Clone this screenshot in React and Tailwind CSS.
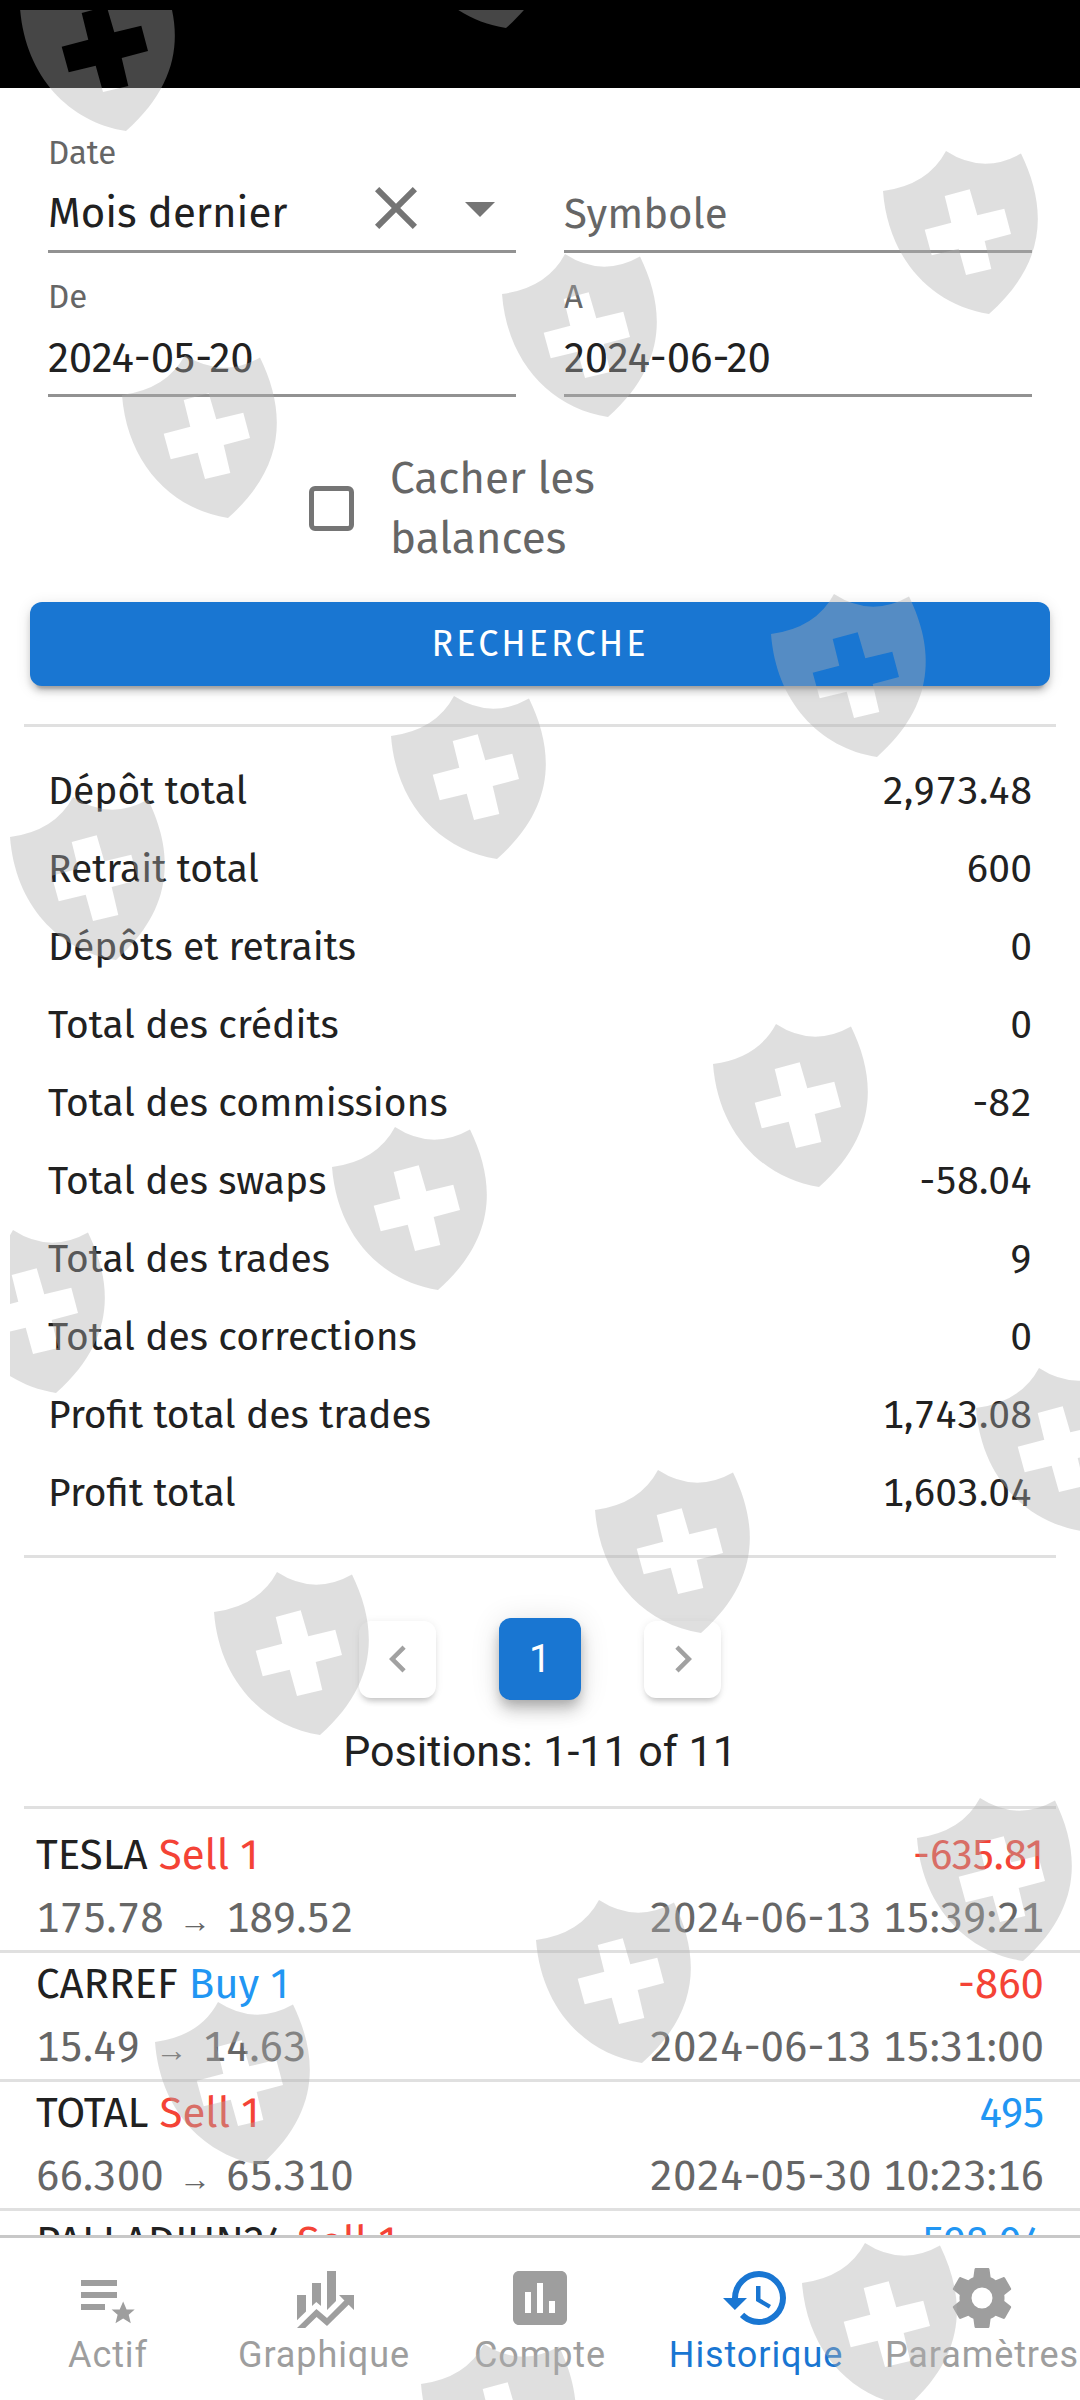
import { useState } from "react";

const ICONS = {
    close: "M19,6.41L17.59,5L12,10.59L6.41,5L5,6.41L10.59,12L5,17.59L6.41,19L12,13.41L17.59,19L19,17.59L13.41,12L19,6.41Z",
    menuDown: "M7,10L12,15L17,10H7Z",
    chevronLeft:
        "M15.41,16.58L10.83,12L15.41,7.41L14,6L8,12L14,18L15.41,16.58Z",
    chevronRight:
        "M8.59,16.58L13.17,12L8.59,7.41L10,6L16,12L10,18L8.59,16.58Z",
    playlistStar:
        "M15,6H3V8H15V6M15,10H3V12H15V10M3,16H11V14H3V16M14.5,20.4L17.05,18.8L19.6,20.4L18.9,17.6L20.9,15.8H18.2L17.05,13.2L15.9,15.8H13.2L15.2,17.6L14.5,20.4Z",
    finance:
        "M6,16.5L3,19.44V11H6M11,14.66L9.43,13.32L8,14.64V7H11M16,13L13,16V3H16M18.81,12.81L17,11H22V16L20.21,14.21L13,21.36L9.53,18.34L5.75,22H3L9.47,15.66L13,18.64",
    chartBox:
        "M9 17H7V10H9V17M13 17H11V7H13V17M17 17H15V13H17V17M19 3H5C3.9 3 3 3.9 3 5V19C3 20.1 3.9 21 5 21H19C20.1 21 21 20.1 21 19V5C21 3.9 20.1 3 19 3Z",
    history:
        "M13.5,8H12V13L16.28,15.54L17,14.33L13.5,12.25V8M13,3A9,9 0 0,0 4,12H1L4.96,16.03L9,12H6A7,7 0 0,1 13,5A7,7 0 0,1 20,12A7,7 0 0,1 13,19C11.07,19 9.32,18.21 8.06,16.94L6.64,18.36C8.27,20 10.5,21 13,21A9,9 0 0,0 22,12A9,9 0 0,0 13,3",
    cog: "M12,15.5A3.5,3.5 0 0,1 8.5,12A3.5,3.5 0 0,1 12,8.5A3.5,3.5 0 0,1 15.5,12A3.5,3.5 0 0,1 12,15.5M19.43,12.97C19.47,12.65 19.5,12.33 19.5,12C19.5,11.67 19.47,11.34 19.43,11L21.54,9.37C21.73,9.22 21.78,8.95 21.66,8.73L19.66,5.27C19.54,5.05 19.27,4.96 19.05,5.05L16.56,6.05C16.04,5.66 15.5,5.32 14.87,5.07L14.5,2.42C14.46,2.18 14.25,2 14,2H10C9.75,2 9.54,2.18 9.5,2.42L9.13,5.07C8.5,5.32 7.96,5.66 7.44,6.05L4.95,5.05C4.73,4.96 4.46,5.05 4.34,5.27L2.34,8.73C2.21,8.95 2.27,9.22 2.46,9.37L4.57,11C4.53,11.34 4.5,11.67 4.5,12C4.5,12.33 4.53,12.65 4.57,12.97L2.46,14.63C2.27,14.78 2.21,15.05 2.34,15.27L4.34,18.73C4.46,18.95 4.73,19.03 4.95,18.95L7.44,17.94C7.96,18.34 8.5,18.68 9.13,18.93L9.5,21.58C9.54,21.82 9.75,22 10,22H14C14.25,22 14.46,21.82 14.5,21.58L14.87,18.93C15.5,18.67 16.04,18.34 16.56,17.94L19.05,18.95C19.27,19.03 19.54,18.95 19.66,18.73L21.66,15.27C21.78,15.05 21.73,14.78 21.54,14.63L19.43,12.97Z",
};

const totals = [
    ["Dépôt total", "2,973.48"],
    ["Retrait total", "600"],
    ["Dépôts et retraits", "0"],
    ["Total des crédits", "0"],
    ["Total des commissions", "-82"],
    ["Total des swaps", "-58.04"],
    ["Total des trades", "9"],
    ["Total des corrections", "0"],
    ["Profit total des trades", "1,743.08"],
    ["Profit total", "1,603.04"],
];

const positions = [
    { symbol: "TESLA", side: "Sell", volume: 1, profit: "-635.81", open: "175.78", close: "189.52", time: "2024-06-13 15:39:21" },
    { symbol: "CARREF", side: "Buy", volume: 1, profit: "-860", open: "15.49", close: "14.63", time: "2024-06-13 15:31:00" },
    { symbol: "TOTAL", side: "Sell", volume: 1, profit: "495", open: "66.300", close: "65.310", time: "2024-05-30 10:23:16" },
    { symbol: "PALLADJUN24", side: "Sell", volume: 1, profit: "598.04" },
];

const tabs = [
    { label: "Actif", icon: "playlistStar" },
    { label: "Graphique", icon: "finance" },
    { label: "Compte", icon: "chartBox" },
    { label: "Historique", icon: "history", active: true },
    { label: "Paramètres", icon: "cog" },
];

const shields = [
    [20, -32], [400, -135], [883, 151], [502, 254], [122, 355],
    [771, 594], [391, 696], [10, 797], [713, 1024], [332, 1127],
    [-50, 1230], [976, 1368], [595, 1470], [214, 1572], [917, 1798],
    [536, 1900], [155, 2002], [802, 2243], [421, 2344],
];

function Icon({ name, className }) {
    return (
        <svg viewBox="0 0 24 24" className={className} fill="currentColor" fillRule="evenodd" aria-hidden="true">
            <path d={ICONS[name]} />
        </svg>
    );
}

function Watermark() {
    return (
        <svg className="pointer-events-none absolute top-2.5 left-2.5 size-full overflow-hidden" aria-hidden="true">
            <g fill="#b0b0b0" fillOpacity="0.4" fillRule="evenodd">
                {shields.map(([x, y]) => (
                    <path
                        key={`${x}-${y}`}
                        transform={`translate(${x - 10} ${y - 10})`}
                        d="M0 40Q45 34 63 0Q100 24 138 2.500C163 54 166 110 106 163C48 154 5 107 0 40ZM61.700 45L68.300 71.700L41.700 78.700L48.700 104.300L75.700 97.700L83 124L108.300 118L101.700 90L128 83L121.300 57.700L94.300 64.300L86.700 38.300Z"
                    />
                ))}
            </g>
        </svg>
    );
}

function Field({ id, label, children }) {
    return (
        <div className="border-b-3 border-[#929292] pt-[26px]">
            <label htmlFor={id} className="block h-[37px] text-[33px] leading-[37px] text-[#666]">
                {label}
            </label>
            <div className="flex h-[78px]">{children}</div>
        </div>
    );
}

const inputClass =
    "h-[73px] w-full min-w-0 self-end bg-transparent text-[42px] text-[#212121] outline-none placeholder:text-[#666] placeholder:opacity-100";

function Filters() {
    const [from, setFrom] = useState("2024-05-20");
    const [to, setTo] = useState("2024-06-20");

    return (
        <form className="pt-[21px]" onSubmit={(e) => e.preventDefault()}>
            <div className="grid grid-cols-2 gap-x-12 px-12">
                <Field id="period" label="Date">
                    <select id="period" className={`${inputClass} flex-1 appearance-none`}>
                        <option>Mois dernier</option>
                    </select>
                    <button type="button" aria-label="Effacer" className="mr-3 size-[72px] shrink-0 text-[#757575]">
                        <Icon name="close" className="size-[72px]" />
                    </button>
                    <Icon name="menuDown" className="size-[72px] shrink-0 text-[#757575]" />
                </Field>
                <Field id="symbol">
                    <input id="symbol" type="text" aria-label="Symbole" placeholder="Symbole" className={inputClass} />
                </Field>
                <Field id="from" label="De">
                    <input id="from" type="text" value={from} onChange={(e) => setFrom(e.target.value)} className={inputClass} />
                </Field>
                <Field id="to" label="A">
                    <input id="to" type="text" value={to} onChange={(e) => setTo(e.target.value)} className={inputClass} />
                </Field>
            </div>

            <div className="mt-[50px] flex items-center justify-center gap-9">
                <input
                    id="hide-balances"
                    type="checkbox"
                    className="size-[45px] appearance-none rounded-md border-5 border-[#757575] checked:bg-[#1976d2]"
                />
                <label htmlFor="hide-balances" className="w-[381px] pt-0.5 text-[44px] leading-[60px] text-[#666]">
                    Cacher les balances
                </label>
            </div>

            <div className="px-[30px] pt-[33px] pb-[38px]">
                <button
                    type="submit"
                    className="h-[84px] w-full rounded-xl bg-[#1976d2] text-[36px] tracking-[3px] text-white uppercase shadow-[0_9px_3px_-6px_rgba(0,0,0,0.2),0_6px_6px_0_rgba(0,0,0,0.14),0_3px_15px_0_rgba(0,0,0,0.12)]"
                >
                    Recherche
                </button>
            </div>
        </form>
    );
}

function Pagination() {
    return (
        <div className="flex flex-col items-center pt-[60px] font-['Roboto','Noto_Sans',sans-serif] text-[#212121]">
            <div className="flex items-center gap-[63px]">
                <button
                    type="button"
                    aria-label="Page précédente"
                    className="flex size-[77px] items-center justify-center rounded-xl bg-white text-[#a1a1a1] shadow-[0_6px_6px_-3px_rgba(0,0,0,0.2),0_1px_8px_0_rgba(0,0,0,0.08)]"
                >
                    <Icon name="chevronLeft" className="size-[54px]" />
                </button>
                <button
                    type="button"
                    aria-current="page"
                    className="flex size-[82px] items-center justify-center rounded-xl bg-[#1976d2] text-[39px] text-white shadow-[0_6px_12px_-3px_rgba(0,0,0,0.2),0_12px_15px_0_rgba(0,0,0,0.14),0_3px_30px_0_rgba(0,0,0,0.12)]"
                >
                    1
                </button>
                <button
                    type="button"
                    aria-label="Page suivante"
                    className="flex size-[77px] items-center justify-center rounded-xl bg-white text-[#a1a1a1] shadow-[0_6px_6px_-3px_rgba(0,0,0,0.2),0_1px_8px_0_rgba(0,0,0,0.08)]"
                >
                    <Icon name="chevronRight" className="size-[54px]" />
                </button>
            </div>
            <p className="mt-[21px] pb-[25px] text-[43px] leading-[60px]">Positions: 1-11 of 11</p>
        </div>
    );
}

function Position({ position }) {
    const { symbol, side, volume, profit, open, close, time } = position;
    return (
        <li className="border-b-3 border-[#e0e0e0] px-9 text-[42px] leading-[63px]">
            <div className="flex h-[63px] justify-between">
                <span>
                    {symbol}{" "}
                    <span className={side === "Buy" ? "text-[#2196f3]" : "text-[#f44336]"}>
                        {side} {volume}
                    </span>
                </span>
                <span className={profit.startsWith("-") ? "text-[#f44336]" : "text-[#2196f3]"}>{profit}</span>
            </div>
            {time && (
                <div className="flex h-[63px] justify-between text-[#666] tabular-nums">
                    <span>
                        {open} <span className="mx-1 font-['Liberation_Serif',serif] text-[32px] leading-none">→</span> {close}
                    </span>
                    <span>{time}</span>
                </div>
            )}
        </li>
    );
}

export default function App() {
    return (
        <div className="relative flex h-screen flex-col overflow-hidden bg-white font-['Fira_Sans','Noto_Sans',sans-serif] text-[#212121]">
            <header className="h-[88px] shrink-0 bg-black" />

            <main className="min-h-0 flex-1 overflow-y-auto [scrollbar-width:none]">
                <Filters />

                <dl className="mx-6 border-y-3 border-[#e0e0e0] px-6 pt-[25px] pb-[23px] text-[39px] leading-[78px]">
                    {totals.map(([label, value]) => (
                        <div key={label} className="flex justify-between">
                            <dt>{label}</dt>
                            <dd className="tabular-nums">{value}</dd>
                        </div>
                    ))}
                </dl>

                <Pagination />

                <hr className="mx-6 border-t-3 border-[#e0e0e0]" />

                <ul className="pt-[15px]">
                    {positions.map((position) => (
                        <Position key={position.symbol} position={position} />
                    ))}
                </ul>
            </main>

            <nav className="flex h-[165px] shrink-0 overflow-hidden border-t-3 border-[#c8c8c8] bg-white font-['Roboto','Noto_Sans',sans-serif]">
                {tabs.map((tab) => (
                    <a
                        key={tab.label}
                        href="#"
                        aria-current={tab.active ? "page" : undefined}
                        className={`flex w-1/5 shrink-0 flex-col items-center pt-6 last:w-[236px] ${
                            tab.active ? "text-[#1976d2]" : "text-[#9e9e9e]"
                        }`}
                    >
                        <Icon name={tab.icon} className="size-[72px]" />
                        <span className="text-[36px] leading-[42px] tracking-wide">{tab.label}</span>
                    </a>
                ))}
            </nav>

            <Watermark />
        </div>
    );
}
